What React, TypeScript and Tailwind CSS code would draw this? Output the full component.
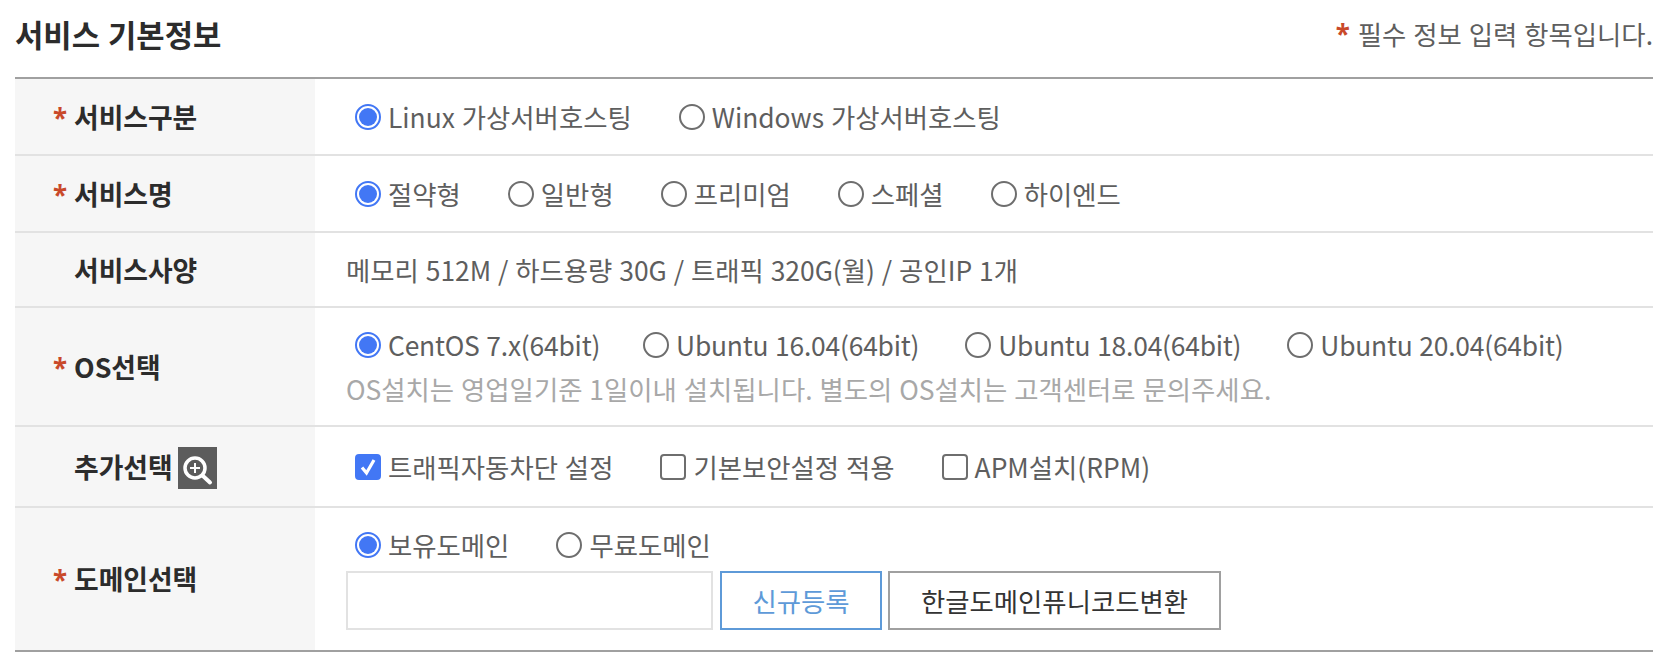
const font = { fontFamily: '"Noto Sans CJK KR", "Noto Sans", sans-serif' };

function Radio({ label, checked = false, className = "" }: { label: string; checked?: boolean; className?: string }) {
  return (
    <label className={`flex items-center ${className}`}>
      <span
        className={`flex h-[26px] w-[26px] shrink-0 items-center justify-center rounded-full border-2 ${
          checked ? "border-[#4277f5]" : "border-[#6e6e6e]"
        }`}
      >
        {checked && <span className="h-[18px] w-[18px] rounded-full bg-[#4277f5]" />}
      </span>
      <span className="ml-[7px] whitespace-nowrap">{label}</span>
    </label>
  );
}

function Check({ label, checked = false, className = "" }: { label: string; checked?: boolean; className?: string }) {
  return (
    <label className={`flex items-center ${className}`}>
      <span
        className={`flex h-[26px] w-[26px] shrink-0 items-center justify-center rounded-[4px] border-2 ${
          checked ? "border-[#4277f5] bg-[#4277f5]" : "border-[#6e6e6e]"
        }`}
      >
        {checked && (
          <svg width="20" height="20" viewBox="0 0 20 20" fill="none">
            <path d="M4 10.5 L8.5 16 L16 3" stroke="#fff" strokeWidth="3.2" />
          </svg>
        )}
      </span>
      <span className="ml-[7px] whitespace-nowrap">{label}</span>
    </label>
  );
}

function Star({ className = "" }: { className?: string }) {
  return <span className={`font-['Noto_Sans'] text-[26px] font-bold leading-none text-[#c9492a] ${className}`}>*</span>;
}

function Row({
  label,
  required = false,
  height,
  last = false,
  extra,
  children,
}: {
  label: string;
  required?: boolean;
  height: string;
  last?: boolean;
  extra?: React.ReactNode;
  children: React.ReactNode;
}) {
  return (
    <div className={`flex ${height} ${last ? "" : "border-b-2 border-[#e2e2e2]"}`}>
      <div className="flex w-[300px] shrink-0 items-center bg-[#f6f6f6] pl-[38px]">
        <span className="w-[21px] shrink-0">{required && <Star />}</span>
        <span className="whitespace-nowrap text-[26.8px] font-bold leading-[36px] text-[#2c2c2c]">{label}</span>
        {extra}
      </div>
      <div className="flex min-w-0 flex-1 flex-col justify-center pl-[31px]">{children}</div>
    </div>
  );
}

export default function App() {
  return (
    <div
      style={font}
      className="h-[664px] w-[1668px] bg-white px-[15px] text-[26.4px] leading-[36px] text-[#5e5e5e] [word-spacing:1px]"
    >
      <div className="flex h-[77px] items-start justify-between">
        <h2 className="mt-[11px] text-[30.8px] font-bold leading-[46px] text-[#2c2c2c]">서비스 기본정보</h2>
        <p className="mt-[16px] flex items-center">
          <Star className="mr-2" />
          필수 정보 입력 항목입니다.
        </p>
      </div>
      <div className="border-y-2 border-[#a0a0a0]">
        <Row label="서비스구분" required height="h-[77px]">
          <div className="flex pl-[9px]">
            <Radio label="Linux 가상서버호스팅" checked className="mr-[47px]" />
            <Radio label="Windows 가상서버호스팅" />
          </div>
        </Row>
        <Row label="서비스명" required height="h-[77px]">
          <div className="flex pl-[9px]">
            <Radio label="절약형" checked className="mr-[47px]" />
            <Radio label="일반형" className="mr-[47px]" />
            <Radio label="프리미엄" className="mr-[47px]" />
            <Radio label="스페셜" className="mr-[47px]" />
            <Radio label="하이엔드" />
          </div>
        </Row>
        <Row label="서비스사양" height="h-[75px]">
          <p className="whitespace-nowrap">메모리 512M / 하드용량 30G / 트래픽 320G(월) / 공인IP 1개</p>
        </Row>
        <Row label="OS선택" required height="h-[119px]">
          <div className="flex pl-[9px] tracking-[-0.2px]">
            <Radio label="CentOS 7.x(64bit)" checked className="mr-[43px]" />
            <Radio label="Ubuntu 16.04(64bit)" className="mr-[46px]" />
            <Radio label="Ubuntu 18.04(64bit)" className="mr-[46px]" />
            <Radio label="Ubuntu 20.04(64bit)" />
          </div>
          <p className="mt-[8px] whitespace-nowrap text-[#a8a8a8]">
            OS설치는 영업일기준 1일이내 설치됩니다. 별도의 OS설치는 고객센터로 문의주세요.
          </p>
        </Row>
        <Row
          label="추가선택"
          height="h-[81px]"
          extra={
            <span className="ml-[5px] mt-[2px] block h-[42px] w-[39px] bg-[#5c5c5c]">
              <svg width="39" height="42" viewBox="0 0 39 42" fill="none" stroke="#fff">
                <circle cx="17" cy="21" r="10" strokeWidth="3.5" />
                <path d="M25 29 L32 35.5" strokeWidth="4" strokeLinecap="round" />
                <path d="M17 16 V26 M12 21 H22" strokeWidth="2" />
              </svg>
            </span>
          }
        >
          <div className="flex pl-[9px]">
            <Check label="트래픽자동차단 설정" checked className="mr-[47px]" />
            <Check label="기본보안설정 적용" className="mr-[47px]" />
            <Check label="APM설치(RPM)" />
          </div>
        </Row>
        <Row label="도메인선택" required height="h-[142px]" last>
          <div className="flex pl-[9px]">
            <Radio label="보유도메인" checked className="mr-[47px]" />
            <Radio label="무료도메인" />
          </div>
          <div className="mb-[1px] mt-[8px] flex">
            <input className="h-[59px] w-[367px] border-2 border-[#e2e2e2] bg-white" />
            <button className="ml-[7px] h-[59px] w-[162px] border-2 border-[#5e9ad8] text-[#5e9ad8]">신규등록</button>
            <button className="ml-[6px] h-[59px] w-[333px] border-2 border-[#a0a0a0] text-[#333]">한글도메인퓨니코드변환</button>
          </div>
        </Row>
      </div>
    </div>
  );
}
